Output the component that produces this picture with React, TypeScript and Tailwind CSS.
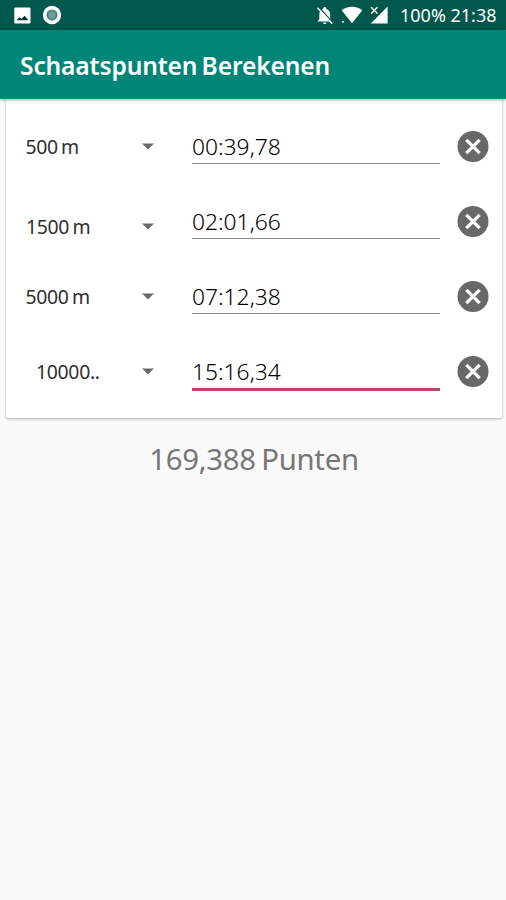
import React from 'react';

interface Entry {
  distance: string;
  time: string;
  labelClass: string;
  arrowClass: string;
  focused?: boolean;
}

const entries: Entry[] = [
  { distance: '500 m', time: '00:39,78', labelClass: 'pl-[18.5px]', arrowClass: '' },
  { distance: '1500 m', time: '02:01,66', labelClass: 'pl-[19px] pt-[10px]', arrowClass: 'pt-[10px]' },
  { distance: '5000 m', time: '07:12,38', labelClass: 'pl-[18.5px]', arrowClass: '' },
  { distance: '10000..', time: '15:16,34', labelClass: 'pl-[29px]', arrowClass: '', focused: true },
];

function StatusBar() {
  return (
    <div className="flex h-[30px] items-center bg-[#00574b] pl-[14px] pr-[9px] text-white">
      <svg width="17" height="17" viewBox="0 0 17 17">
        <rect x="0.3" y="0.5" width="16.2" height="16" rx="1.2" fill="#fff" />
        <path d="M2.5 13.2 5.5 10.2l2 1.6 3.2-3 3.6 4.4z" fill="#00332c" />
      </svg>
      <svg className="ml-[11px]" width="20" height="20" viewBox="0 0 20 20">
        <circle cx="10" cy="10" r="9.2" fill="#fff" />
        <circle cx="10" cy="10" r="5.6" fill="#4b877d" />
        <circle cx="10" cy="10" r="3.6" fill="#6d9d95" />
      </svg>
      <svg className="ml-auto" width="17" height="19" viewBox="0 0 17 19">
        <path
          d="M8.7 1c.9 0 1.5.6 1.5 1.5v.6c2.6.7 4 2.8 4 5.4v4.7l1.6 1.7v.7H1.7v-.7l1.6-1.7V8.5c0-2.6 1.4-4.7 3.9-5.4v-.6C7.2 1.6 7.8 1 8.7 1zM7 16.4h3.5c0 1-.8 1.7-1.75 1.7S7 17.4 7 16.4z"
          fill="#fff"
        />
        <path d="M2.8 1.2 17 16.6" stroke="#00574b" strokeWidth="1.3" />
        <path d="M1.4 1.8 16.2 17.8" stroke="#fff" strokeWidth="1.6" />
      </svg>
      <svg className="ml-[8px]" width="22" height="18" viewBox="0 0 22 18">
        <path d="M11 17.2.6 4.2C3.4 2 7 .8 11 .8s7.6 1.2 10.4 3.4z" fill="#fff" />
        <path d="M1 15.8h2" stroke="#fff" strokeWidth="1.6" />
      </svg>
      <svg className="ml-[7px]" width="18" height="18" viewBox="0 0 18 18">
        <path d="M17.6.6v16.8H.8z" fill="#fff" />
        <path d="M0 0h9v7.8H0z" fill="#00574b" />
        <path d="m1.2 1.2 6.2 6.2m0-6.2L1.2 7.4" stroke="#fff" strokeWidth="1.4" />
      </svg>
      <span className="ml-[12px] w-[97px] whitespace-nowrap text-[18px] leading-[30px]">
        100% 21:38
      </span>
    </div>
  );
}

function EntryRow({ distance, time, labelClass, arrowClass, focused }: Entry) {
  return (
    <div className="flex h-[75px] items-center">
      <div
        className={`w-[135px] whitespace-nowrap text-[19.4px] leading-[24px] tracking-[-0.3px] text-[#2e2e2e] [word-spacing:-1.5px] ${labelClass}`}
      >
        {distance}
      </div>
      <div className={`w-[50px] ${arrowClass}`}>
        <svg width="12" height="7" viewBox="0 0 12 7">
          <path d="M0 .5h12l-6 6z" fill="#6b6b6b" />
        </svg>
      </div>
      <div
        className={`w-[248px] ${
          focused ? 'mt-[2px] h-[37px] border-b-[3px] border-[#c2416f]' : 'h-[35px] border-b border-[#8c8c8c]'
        }`}
      >
        <span className="block whitespace-nowrap text-[22.8px] leading-[36px] font-light text-black">{time}</span>
      </div>
      <svg className="ml-[17px]" width="32" height="32" viewBox="0 0 32 32">
        <circle cx="16" cy="15.5" r="15.5" fill="#686868" />
        <path d="m9.3 8.8 13.4 13.4m0-13.4L9.3 22.2" stroke="#fff" strokeWidth="3.3" />
      </svg>
    </div>
  );
}

export default function App() {
  return (
    <div className="h-[900px] w-[506px] overflow-hidden bg-[#fafafa] font-['Noto_Sans',sans-serif]">
      <StatusBar />
      <header className="relative flex h-[69px] items-center bg-[#008577] pl-[20px] shadow-[0_1px_3px_rgba(0,0,0,0.35)]">
        <h1 className="pt-[3px] text-[24.6px] font-semibold leading-[36px] tracking-[-0.15px] whitespace-nowrap text-white [word-spacing:-2px]">
          Schaatspunten Berekenen
        </h1>
      </header>
      <main>
        <section className="mr-[4px] ml-[6px] h-[319px] rounded-b-[3px] bg-white pt-[10px] pl-px shadow-[0_1px_3px_rgba(0,0,0,0.3)]">
          {entries.map((entry) => (
            <EntryRow key={entry.distance} {...entry} />
          ))}
        </section>
        <p className="mt-[21px] pl-[2px] text-center text-[29.3px] leading-[40px] tracking-[-0.25px] text-[#767676] [word-spacing:-2px]">
          169,388 Punten
        </p>
      </main>
    </div>
  );
}
